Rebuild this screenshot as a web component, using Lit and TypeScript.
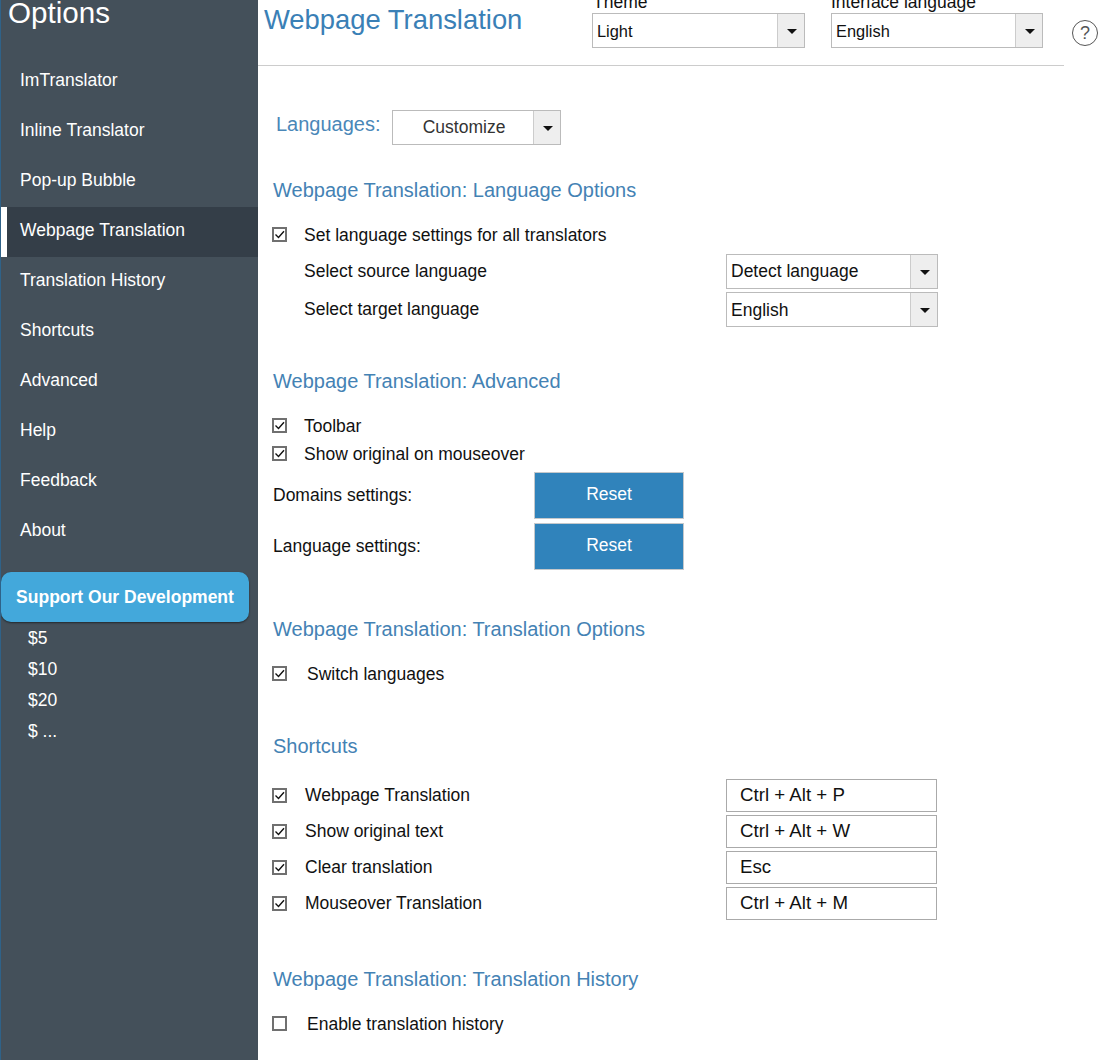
import { LitElement, html, svg, css } from "lit";
import { customElement } from "lit/decorators.js";

const NAV = ["ImTranslator","Inline Translator","Pop-up Bubble","Webpage Translation","Translation History","Shortcuts","Advanced","Help","Feedback","About"];
const AMOUNTS = ["$5","$10","$20","$ ..."];
const SHORTCUTS = [["Webpage Translation","Ctrl + Alt + P"],["Show original text","Ctrl + Alt + W"],["Clear translation","Esc"],["Mouseover Translation","Ctrl + Alt + M"]];

const box = (checked = true) => html`<svg class="cb" viewBox="0 0 15 15" width="15" height="15" aria-hidden="true">
  <rect x="1" y="1" width="13" height="13" fill="#fff" stroke="#707070" stroke-width="2"></rect>
  ${checked ? svg`<path d="M3.5 7.5 L6.5 10.5 L12 4.2" fill="none" stroke="#111" stroke-width="1.4"></path>` : ""}
</svg>`;

const select = (text: string, cls = "") => html`<div class="select ${cls}"><span class="value">${text}</span><span class="arrow"><i></i></span></div>`;

@customElement("app-root")
export class AppRoot extends LitElement {
  static styles = css`
    :host { display: block; width: 1102px; height: 1060px; overflow: hidden; background: #fff; font-family: "Liberation Sans", Arial, sans-serif; font-size: 17.5px; color: #111; }
    .app { display: flex; height: 1060px; }
    .side { width: 258px; flex: none; box-sizing: border-box; background: #44505a; border-left: 1px solid #2f6288; color: #fff; position: relative; overflow: hidden; }
    .logo { font-size: 29.6px; line-height: 30px; margin: -2px 0 0 7px; height: 59px; }
    .nav { display: flex; flex-direction: column; }
    .nav a { height: 50px; line-height: 46px; padding-left: 19px; }
    .nav a.on { background: #343e48; border-left: 6px solid #fff; padding-left: 13px; }
    .support { margin: 15px 0 0 0; width: 248px; height: 50px; line-height: 50px; text-align: center; border-radius: 10px; background: #43a8db; font-weight: 700; box-shadow: 0 1px 2px rgba(0,0,0,.5); }
    .amounts { display: flex; flex-direction: column; padding: 1px 0 0 27px; }
    .amounts div { height: 31px; line-height: 31px; }
    .main { flex: 1; min-width: 0; display: flex; flex-direction: column; }
    .head { width: 806px; height: 65px; flex: none; border-bottom: 1px solid #ccc; position: relative; display: flex; }
    .title { font-size: 27.4px; line-height: 40px; color: #3a80b6; margin-left: 6px; width: 328px; }
    .hf { display: flex; flex-direction: column; margin-top: -9px; }
    .hf label { height: 22px; line-height: 22px; font-size: 17.5px; }
    .hf.theme { width: 239px; }
    .hf.theme label { padding-left: 1px; }
    .help { position: absolute; left: 814px; top: 20px; width: 26px; height: 26px; border: 1.5px solid #555; border-radius: 50%; box-sizing: border-box; text-align: center; font-size: 18px; line-height: 24px; color: #555; }
    .select { display: flex; box-sizing: border-box; height: 35px; border: 1px solid #bbb; background: #fff; }
    .select .value { flex: 1; line-height: 34px; padding-left: 4px; white-space: nowrap; }
    .select .arrow { width: 27px; flex: none; border-left: 1px solid #ccc; background: #eee; display: flex; align-items: center; justify-content: center; box-sizing: border-box; }
    .select .arrow i { width: 0; height: 0; border-left: 5px solid transparent; border-right: 5px solid transparent; border-top: 5px solid #111; margin: 2px 0 0 2px; }
    .select.small { font-size: 16.4px; }
    .select.small .value { line-height: 35px; }
    .select.w213 { width: 213px; }
    .select.w212 { width: 212px; }
    .select.cust { width: 169px; margin-left: 11px; }
    .select.cust .value { text-align: center; padding-left: 3px; color: #333; line-height: 32px; }
    .content { display: flex; flex-direction: column; padding-left: 15px; }
    .langs { display: flex; margin-top: 44px; height: 35px; padding-left: 3px; }
    .langs-label { font-size: 20px; line-height: 28px; color: #4a87b8; }
    h2 { margin: 44px 0 0; font-weight: 400; font-size: 20px; line-height: 30px; height: 30px; color: #4482b4; }
    h2.first { margin-top: 30px; }
    h2.second { margin-top: 39px; }
    h2.short { margin-top: 43px; }
    .rows { display: flex; flex-direction: column; margin-top: 16px; }
    .row { display: flex; align-items: center; height: 28px; }
    .cb { flex: none; margin: -1px 17px 0 -1px; }
    .wide .cb { margin-right: 20px; }
    .mid .cb { margin-right: 18px; }
    .pick { display: flex; align-items: center; height: 35px; padding-left: 31px; }
    .pick-label { width: 422px; }
    .pick.a { margin-top: 5px; }
    .pick.a .value { line-height: 33px; }
    .pick.b { margin-top: 3px; }
    .reset-row { display: flex; align-items: center; height: 47px; margin-top: 4px; }
    .reset-label { width: 261px; }
    .btn { box-sizing: border-box; width: 150px; height: 47px; background: #3083bb; border: 1px solid #c4c8cb; color: #fff; text-align: center; line-height: 43px; }
    .keys { display: flex; flex-direction: column; gap: 3px; margin-top: 18px; }
    .key { display: flex; align-items: center; height: 33px; }
    .keytext { width: 421px; flex: none; }
    .key b { font-weight: 400; box-sizing: border-box; width: 211px; height: 33px; border: 1px solid #aaa; font-size: 18.7px; line-height: 29px; padding-left: 13px; color: #111; }
  `;

  render() {
    return html`<div class="app">
      <aside class="side">
        <div class="logo">Options</div>
        <nav class="nav">${NAV.map((n) => html`<a class=${n === "Webpage Translation" ? "on" : ""}>${n}</a>`)}</nav>
        <div class="support">Support Our Development</div>
        <div class="amounts">${AMOUNTS.map((a) => html`<div>${a}</div>`)}</div>
      </aside>
      <main class="main">
        <header class="head">
          <div class="title">Webpage Translation</div>
          <div class="hf theme"><label>Theme</label>${select("Light", "small w213")}</div>
          <div class="hf"><label>Interface language</label>${select("English", "small w212")}</div>
          <div class="help">?</div>
        </header>
        <div class="content">
          <div class="langs"><span class="langs-label">Languages:</span>${select("Customize", "cust")}</div>

          <h2 class="first">Webpage Translation: Language Options</h2>
          <div class="rows"><div class="row">${box()}<span>Set language settings for all translators</span></div></div>
          <div class="pick a"><span class="pick-label">Select source language</span>${select("Detect language", "w212")}</div>
          <div class="pick b"><span class="pick-label">Select target language</span>${select("English", "w212")}</div>

          <h2 class="second">Webpage Translation: Advanced</h2>
          <div class="rows">
            <div class="row">${box()}<span>Toolbar</span></div>
            <div class="row">${box()}<span>Show original on mouseover</span></div>
          </div>
          <div class="reset-row"><span class="reset-label">Domains settings:</span><div class="btn">Reset</div></div>
          <div class="reset-row"><span class="reset-label">Language settings:</span><div class="btn">Reset</div></div>

          <h2>Webpage Translation: Translation Options</h2>
          <div class="rows wide"><div class="row">${box()}<span>Switch languages</span></div></div>

          <h2 class="short">Shortcuts</h2>
          <div class="keys mid">
            ${SHORTCUTS.map(([t, k]) => html`<div class="key">${box()}<span class="keytext">${t}</span><b>${k}</b></div>`)}
          </div>

          <h2>Webpage Translation: Translation History</h2>
          <div class="rows wide"><div class="row">${box(false)}<span>Enable translation history</span></div></div>
        </div>
      </main>
    </div>`;
  }
}
